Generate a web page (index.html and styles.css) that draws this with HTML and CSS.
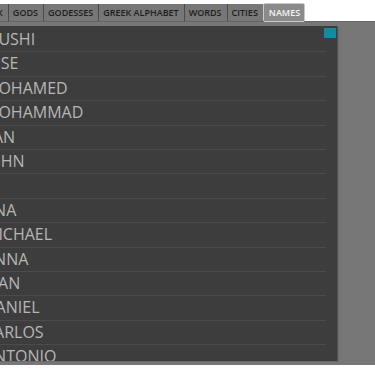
FILE: index.html
```html
<!DOCTYPE html>
<html lang="en">
<head>
  <meta charset="UTF-8">
  <title>Names</title>
  <link rel="stylesheet" href="styles.css">
</head>
<body>

  <!-- Category tabs -->
  <div class="tabs">
    <div class="tab">BOOK</div>
    <div class="tab">GODS</div>
    <div class="tab">GODESSES</div>
    <div class="tab">GREEK ALPHABET</div>
    <div class="tab">WORDS</div>
    <div class="tab">CITIES</div>
    <div class="tab active">NAMES</div>
  </div>

  <!-- Word list -->
  <div class="frame">
    <div class="panel">
      <span class="thumb"></span>
      <ul class="list">
        <li>MUSHI</li>
        <li>JOSE</li>
        <li>MOHAMED</li>
        <li>MOHAMMAD</li>
        <li>YAN</li>
        <li>JOHN</li>
        <li>LI</li>
        <li>ANA</li>
        <li>MICHAEL</li>
        <li>ANNA</li>
        <li>IVAN</li>
        <li>DANIEL</li>
        <li>CARLOS</li>
        <li>ANTONIO</li>
      </ul>
    </div>
  </div>

</body>
</html>
```

FILE: styles.css
```css
body {
  margin: 0;
  background: #fff;
  font-family: "Open Sans", Arial, sans-serif;
  overflow: hidden;
}

.tabs {
  display: flex;
  align-items: center;
  margin: 4px 0 0 -27px;
  height: 17px;
}

.tab {
  height: 17px;
  line-height: 17px;
  padding: 0 5px 0 4px;
  background: #777;
  color: #1e1e1e;
  font-size: 9px;
  font-weight: 600;
  border-right: 1px solid #4a4a4a;
  box-sizing: border-box;
  white-space: nowrap;
}

.tab.active {
  height: 19px;
  line-height: 17px;
  padding: 0 4px 0 5px;
  background: #8a8a8a;
  color: #f4f4f4;
  border: 1px solid #c9c9c9;
  border-radius: 2px;
  margin-left: -1px;
}

.frame {
  width: calc(100% + 40px);
  margin-left: -40px;
  padding: 4px;
  box-sizing: border-box;
  background: #777;
  border-top: 1px solid #666;
}

.panel {
  position: relative;
  width: 374px;
  height: 335px;
  overflow: hidden;
  background: #3d3d3d;
  border-right: 1px solid #555;
  box-sizing: border-box;
  box-shadow: 1px 1px 0 #6a6a6a;
}

.thumb {
  position: absolute;
  top: 2px;
  right: 1px;
  width: 12px;
  height: 10px;
  background: #148aa0;
}

.list {
  list-style: none;
  margin: 0 11px 0 0;
  padding: 2px 0 0 20px;
}

.list li {
  font-size: 16px;
  line-height: 23.4px;
  color: #b6b6b6;
  border-bottom: 1px solid #4b4b4b;
  white-space: nowrap;
}
```
